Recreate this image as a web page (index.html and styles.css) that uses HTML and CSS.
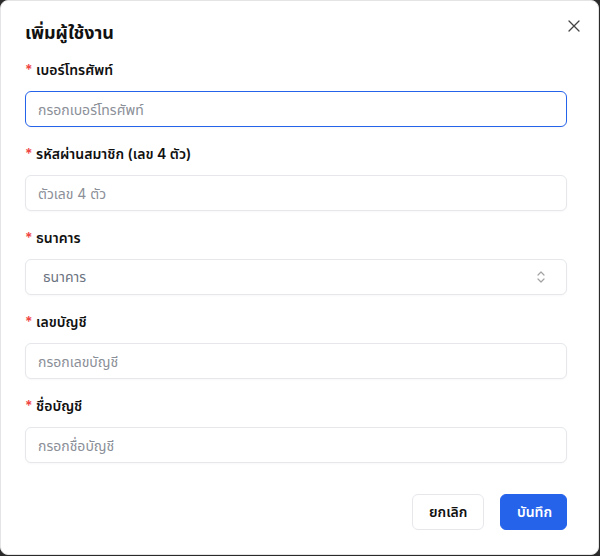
FILE: index.html
```html
<!DOCTYPE html>
<html lang="th">
<head>
<meta charset="utf-8">
<title>เพิ่มผู้ใช้งาน</title>
<link rel="stylesheet" href="styles.css">
</head>
<body>
<div class="dialog">
  <div class="header">
    <h2 class="title">เพิ่มผู้ใช้งาน</h2>
    <button class="close" aria-label="close">
      <svg width="12" height="12" viewBox="0 0 12 12"><path d="M1 1L11 11M11 1L1 11" stroke="#444" stroke-width="1.3" stroke-linecap="round"/></svg>
    </button>
  </div>
  <form class="form">
    <div class="field">
      <label class="label"><span class="req">*</span> เบอร์โทรศัพท์</label>
      <input class="input focus" placeholder="กรอกเบอร์โทรศัพท์">
    </div>
    <div class="field">
      <label class="label"><span class="req">*</span> รหัสผ่านสมาชิก (เลข 4 ตัว)</label>
      <input class="input" placeholder="ตัวเลข 4 ตัว">
    </div>
    <div class="field">
      <label class="label"><span class="req">*</span> ธนาคาร</label>
      <div class="select">
        <span class="select-text">ธนาคาร</span>
        <svg width="10" height="14" viewBox="0 0 10 14"><path d="M2 5L5 2L8 5M2 9L5 12L8 9" fill="none" stroke="#a3a3a3" stroke-width="1.2" stroke-linecap="round" stroke-linejoin="round"/></svg>
      </div>
    </div>
    <div class="field">
      <label class="label"><span class="req">*</span> เลขบัญชี</label>
      <input class="input" placeholder="กรอกเลขบัญชี">
    </div>
    <div class="field">
      <label class="label"><span class="req">*</span> ชื่อบัญชี</label>
      <input class="input" placeholder="กรอกชื่อบัญชี">
    </div>
  </form>
  <div class="footer">
    <button class="btn btn-cancel">ยกเลิก</button>
    <button class="btn btn-save">บันทึก</button>
  </div>
</div>
</body>
</html>
```
FILE: styles.css
```css
html, body {
  margin: 0;
  padding: 0;
}
body {
  background: #2a2a2a;
  width: 600px;
  height: 556px;
  font-family: Inter, "Noto Sans Thai", sans-serif;
  color: #111;
}
.dialog {
  box-sizing: border-box;
  width: 599px;
  height: 555px;
  background: #fff;
  border: 1px solid #e4e4e7;
  border-radius: 8px;
  padding: 18px 31px 0 24px;
  display: flex;
  flex-direction: column;
}
.header {
  display: flex;
  justify-content: space-between;
  align-items: flex-start;
}
.title {
  margin: 0;
  font-size: 18px;
  font-weight: 700;
  line-height: 28px;
}
.close {
  border: 0;
  background: none;
  padding: 0;
  margin: 0 -13px 0 0;
  width: 12px;
  height: 12px;
  margin-top: 1px;
  display: flex;
}
.form {
  margin-top: 13px;
  display: flex;
  flex-direction: column;
  gap: 17px;
}
.field {
  display: flex;
  flex-direction: column;
  gap: 11px;
}
.label {
  font-size: 14px;
  font-weight: 600;
  line-height: 20px;
}
.req {
  color: #ef4444;
}
.input, .select {
  box-sizing: border-box;
  width: 100%;
  height: 36px;
  border: 1px solid #e5e7eb;
  border-radius: 6px;
  padding: 0 12px;
  font-family: inherit;
  font-size: 14px;
  background: #fff;
  outline: none;
  box-shadow: 0 1px 2px rgba(0,0,0,0.03);
}
.input::placeholder {
  color: #8b8f98;
}
.input.focus {
  border-color: #2563eb;
}
.select {
  display: flex;
  align-items: center;
  justify-content: space-between;
  padding: 0 20px 0 17px;
  color: #6b7280;
}
.footer {
  margin-top: auto;
  margin-bottom: 24px;
  display: flex;
  justify-content: flex-end;
  gap: 16px;
}
.btn {
  height: 36px;
  border-radius: 6px;
  font-family: inherit;
  font-size: 14px;
  font-weight: 600;
  padding: 0 16px;
}
.btn-cancel {
  background: #fff;
  border: 1px solid #e5e7eb;
  color: #111;
  width: 72px;
}
.btn-save {
  background: #2563eb;
  border: 1px solid #2563eb;
  color: #fff;
  width: 67px;
}
```
